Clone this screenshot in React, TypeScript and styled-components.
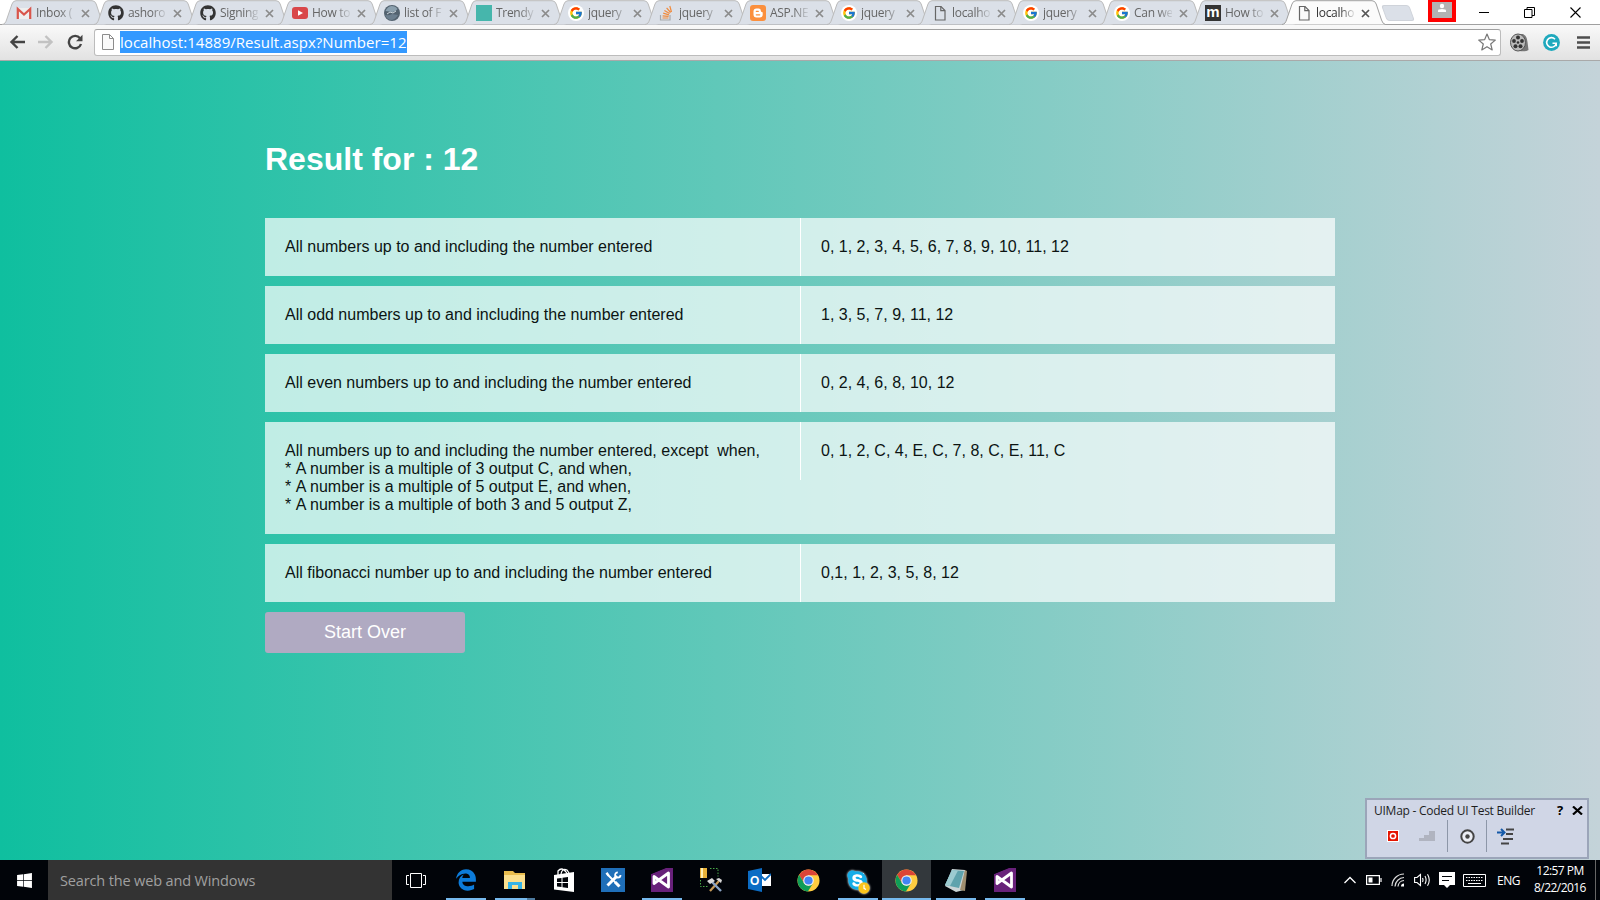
import React from "react";
import styled, { createGlobalStyle, css } from "styled-components";
import { FaGithub, FaWindows, FaEdgeLegacy, FaSkype } from "react-icons/fa6";
import { FcGoogle } from "react-icons/fc";

const UI = `"Open Sans", "Noto Sans", sans-serif`;

const Global = createGlobalStyle`
  * { box-sizing: border-box; }
  body { margin: 0; overflow: hidden; }
  svg { display: block; flex: none; }
`;

const Screen = styled.div`
  width: 1600px;
  height: 900px;
  display: flex;
  flex-direction: column;
  overflow: hidden;
  position: relative;
  font-family: ${UI};
`;

/* ---------- tab strip ---------- */
const Strip = styled.div`
  height: 24px;
  display: flex;
  flex: none;
  padding-left: 3px;
  background: #fff;
`;
const TabBox = styled.div<{ $active?: boolean }>`
  width: 91px;
  height: 24px;
  flex: none;
  position: relative;
  display: flex;
  align-items: center;
  padding: 2px 0 0 13px;
  z-index: ${(p) => (p.$active ? 2 : "auto")};
  svg { position: relative; }
  &:nth-child(-n + 6) { width: 92px; }
`;
const TabShape = styled.svg`
  && {
    position: absolute;
    left: -1px;
    top: 0;
  }
`;
const TabTitle = styled.span<{ $active?: boolean }>`
  position: relative;
  width: 38px;
  margin-left: 4px;
  white-space: nowrap;
  font-size: 12px;
  line-height: 18px;
  letter-spacing: -0.3px;
  color: ${(p) => (p.$active ? "#333" : "#666")};
  mask-image: linear-gradient(90deg, #000 62%, rgba(0, 0, 0, 0.15) 100%);
`;
const CloseX = styled.svg`
  margin: 1px 0 0 7px;
`;
const NewTab = styled.div`
  width: 28px;
  height: 16px;
  margin: 5px 0 0 10px;
  background: #dbe0e8;
  border: 1px solid #cfd3da;
  border-radius: 3px;
  transform: skewX(20deg);
`;
const Avatar = styled.div`
  width: 28px;
  height: 22px;
  margin-left: auto;
  background: #b2b2b2;
  border: solid #f00;
  border-width: 2px 4px 4px;
  display: flex;
  justify-content: center;
`;
const WinButtons = styled.div`
  width: 144px;
  height: 24px;
  display: flex;
  align-items: center;
  padding: 0 19px 0 23px;
  justify-content: space-between;
`;

/* ---------- toolbar ---------- */
const Toolbar = styled.div`
  height: 37px;
  flex: none;
  display: flex;
  align-items: center;
  padding: 0 9px 1px 9px;
  background: linear-gradient(#f9f9f9, #e2e2e2);
  border-top: 1px solid #a0a0a0;
  border-bottom: 1px solid #a9a9a9;
`;
const NavIcons = styled.div`
  display: flex;
  width: 85px;
  gap: 13px;
`;
const Omnibox = styled.div`
  width: 1407px;
  height: 27px;
  display: flex;
  align-items: center;
  padding: 0 4px 0 7px;
  background: #fff;
  border: 1px solid #bcbcbc;
  border-top-color: #a0a0a0;
  border-radius: 3px;
`;
const Url = styled.span`
  margin: 0 auto 0 6px;
  height: 22px;
  width: 287px;
  line-height: 23px;
  background: #3399ff;
  color: #fff;
  font-size: 15px;
  letter-spacing: 0.04px;
  white-space: nowrap;
`;
const Extensions = styled.div`
  display: flex;
  align-items: center;
  justify-content: space-between;
  width: 80px;
  margin-left: 9px;
`;
const Grammar = styled.svg`
  margin-right: 3px;
`;

/* ---------- web page ---------- */
const Page = styled.main`
  flex: none;
  height: 799px;
  padding: 77px 265px 0;
  background: linear-gradient(90deg, #0fbf9f, #c4d3d9);
  font-family: "Liberation Sans", Arial, sans-serif;
  font-size: 16px;
  line-height: 18px;
`;
const Heading = styled.h1`
  margin: 0 0 59px;
  font-size: 32px;
  line-height: 42px;
  height: 21px;
  font-weight: bold;
  color: #fff;
`;
const ResultRow = styled.div`
  display: flex;
  align-items: flex-start;
  width: 1070px;
  margin-bottom: 10px;
  background: rgba(255, 255, 255, 0.7);
  color: #0c1413;
`;
const Label = styled.div`
  width: 535px;
  padding: 20px;
  white-space: pre;
`;
const Star = styled.span`
  margin-right: 0.1px;
`;
const Value = styled.div`
  width: 535px;
  padding: 20px;
  border-left: 1px solid #fff;
`;
const StartOver = styled.button`
  display: block;
  width: 200px;
  height: 41px;
  padding: 0 0 2px;
  border: 0;
  border-radius: 3px;
  background: #b0aac2;
  color: #fff;
  font: 18px/36px "Liberation Sans", Arial, sans-serif;
`;

/* ---------- floating test builder ---------- */
const Builder = styled.aside`
  position: absolute;
  left: 1365px;
  top: 798px;
  width: 224px;
  height: 61px;
  border: 2px solid #9ba5b9;
  background: #d0d6e6;
`;
const BuilderTitle = styled.div`
  display: flex;
  align-items: center;
  height: 20px;
  padding: 0 4px 0 7px;
  font-size: 12px;
  color: #1e1e1e;
  white-space: nowrap;
`;
const BuilderName = styled.span`
  width: 183px;
  letter-spacing: -0.25px;
`;
const BuilderHelp = styled.b`
  width: 15px;
  font-size: 13px;
  color: #000;
`;
const BuilderTools = styled.div`
  display: flex;
  align-items: center;
  height: 32px;
  padding-left: 20px;
`;
const Rule = styled.i<{ $l: number; $r: number }>`
  width: 1px;
  height: 32px;
  background: #8d97a8;
  margin: 0 ${(p) => p.$r}px 0 ${(p) => p.$l}px;
`;
const StepsIcon = styled.svg`
  margin-left: 20px;
`;

/* ---------- taskbar ---------- */
const Taskbar = styled.footer`
  height: 40px;
  flex: none;
  display: flex;
  background: #010409;
  color: #fff;
`;
const Start = styled.div`
  width: 48px;
  display: flex;
  align-items: center;
  justify-content: center;
`;
const Search = styled.div`
  width: 344px;
  padding-left: 12px;
  background: #333;
  color: #a0a0a0;
  font-size: 14.5px;
  line-height: 41px;
  letter-spacing: -0.14px;
`;
const Task = styled.div<{ $open?: boolean; $active?: boolean; $grouped?: boolean }>`
  width: 49px;
  height: 40px;
  flex: none;
  display: flex;
  align-items: center;
  justify-content: center;
  position: relative;
  background: ${(p) => (p.$active ? "#33383c" : "none")};
  ${(p) =>
    p.$open &&
    css`
      &::after {
        content: "";
        position: absolute;
        left: ${p.$active ? 0 : 5}px;
        right: ${p.$active ? 0 : 4}px;
        bottom: 0;
        height: 2px;
        background: ${p.$grouped ? "linear-gradient(90deg, #76b9ed 79%, #4d7ba0 79%)" : "#76b9ed"};
      }
    `}
`;
const TaskViewTask = styled(Task)`
  padding-right: 1px;
`;
const Tray = styled.div`
  margin-left: auto;
  display: flex;
  align-items: center;
  gap: 8px;
`;
const Battery = styled.svg`
  margin: 0 1px 0 2px;
`;
const Lang = styled.span`
  width: 25px;
  margin-left: 3px;
  font-size: 12px;
  letter-spacing: -0.5px;
`;
const Clock = styled.div`
  width: 60px;
  font-size: 12px;
  line-height: 17px;
  letter-spacing: -0.55px;
  text-align: center;
  white-space: nowrap;
  padding-bottom: 2px;
`;
const Peek = styled.div`
  width: 5px;
  height: 40px;
  margin-left: -3px;
  border-left: 1px solid #666;
`;

/* ---------- icons ---------- */
const Gmail = () => (
  <svg width="16" height="16" viewBox="0 0 16 16">
    <path d="M1 3h14v11H1z" fill="#eee" />
    <path d="M1.800 14V4l6.200 5.500L14.200 4v10" fill="none" stroke="#d9554b" strokeWidth="2.200" />
  </svg>
);
const Github = () => <FaGithub size={16} color="#333" />;
const YouTube = () => (
  <svg width="16" height="16" viewBox="0 0 16 16">
    <rect y="2" width="16" height="12" rx="3" fill="#d9474a" />
    <path d="M6 5.200v5.600L11 8z" fill="#fff" />
  </svg>
);
const Globe = () => (
  <svg width="16" height="16" viewBox="0 0 16 16">
    <circle cx="8" cy="8" r="8" fill="#53626f" />
    <path d="M1.500 6q2-4.500 6-5 4 0 6 3-2 3-5 3z" fill="#8ba0ae" />
    <path d="M1 10q4 1 7-1l6 1q-2 4-6 5-5 0-7-5z" fill="#6b7e8e" />
    <path d="M3 9l3-2 3 1 3-2" fill="none" stroke="#ccd6dc" />
  </svg>
);
const Teal = () => (
  <svg width="16" height="16">
    <rect width="16" height="16" fill="#46b6ac" />
  </svg>
);
const GoogleHolder = styled.span`
  position: relative;
  width: 16px;
  height: 16px;
  border-radius: 50%;
  background: #fff;
  display: flex;
  align-items: center;
  justify-content: center;
`;
const Google = () => (
  <GoogleHolder>
    <FcGoogle size={14} />
  </GoogleHolder>
);
const Stack = () => (
  <svg width="16" height="16" viewBox="0 0 16 16">
    <path d="M1.500 10v5h9.500v-5" fill="none" stroke="#a7a9ac" strokeWidth="1.200" />
    <path d="M3.500 13h6M3.600 10.800l6 .6M4.200 8.200l5.800 1.600M5.400 5.400l5.200 3.200M7.600 2.900l4 4.600M10.800 1l1.700 6" stroke="#f08a3c" strokeWidth="1.200" />
  </svg>
);
const Blogger = () => (
  <svg width="16" height="16" viewBox="0 0 16 16">
    <rect width="16" height="16" rx="3" fill="#fb8f3d" />
    <path d="M6.500 3.500h2a2.400 2.400 0 0 1 2.400 2.400q0 1 1 1t.8 1v1.600a3 3 0 0 1-3 3H6.500a3 3 0 0 1-3-3v-3a3 3 0 0 1 3-3z" fill="#fff" />
    <path d="M6.300 6.300h2M6.300 9.800h3.400" stroke="#fb8f3d" strokeWidth="1.300" strokeLinecap="round" />
  </svg>
);
const FileIcon = () => (
  <svg width="16" height="16" viewBox="0 0 16 16" fill="none" stroke="#666" strokeWidth="1.200">
    <path d="M3.500 1.500h5.500l4 4v9.500h-9.500z" />
    <path d="M8.800 1.500v4.200h4.200" />
  </svg>
);
const MLetter = styled.span`
  position: relative;
  width: 16px;
  height: 16px;
  background: #333;
  color: #fff;
  font: bold 15px/13px "Liberation Sans", sans-serif;
  text-align: center;
`;
const MLogo = () => <MLetter>m</MLetter>;

const Chrome = () => (
  <svg width="23" height="23" viewBox="0 0 24 24">
    <circle cx="12" cy="12" r="11.500" fill="#ffcd40" />
    <path d="M2.200 6.100A11.500 11.500 0 0 1 22 6.500L12 6.500 7.300 14.700z" fill="#db4437" />
    <path d="M2.200 6.100 7.300 14.700 12 17.500 16.500 15 11.400 23.500A11.500 11.500 0 0 1 2.200 6.100z" fill="#0f9d58" />
    <circle cx="12" cy="12" r="5.500" fill="#f1f1f1" />
    <circle cx="12" cy="12" r="4.300" fill="#4285f4" />
  </svg>
);
const VisualStudio = () => (
  <svg width="22" height="24" viewBox="0 0 22 24">
    <path d="M0 6 14 0H22V24H0z" fill="#68217a" />
    <path d="M0 0h15L0 6z" fill="#010409" />
    <path d="M3 8.500v7L17.500 5v14z" fill="none" stroke="#fff" strokeWidth="2.800" strokeLinejoin="round" />
  </svg>
);
const TaskView = () => (
  <svg width="20" height="15" viewBox="0 0 20 15" fill="none" stroke="#fff">
    <path d="M4.500.5h11v14h-11zM3 2.500H.5v9H3M17 2.500h2.500v9H17" />
  </svg>
);
const Explorer = () => (
  <svg width="23" height="20" viewBox="0 0 23 20">
    <path d="M1 1h9l2 2h10v15H1z" fill="#e9bd4e" />
    <path d="M1 5h21v14H1z" fill="#fbe08e" />
    <path d="M5 12h14v7h-4v-4H9v4H5z" fill="#35b4e8" />
  </svg>
);
const Store = () => (
  <svg width="22" height="24" viewBox="0 0 22 24">
    <path d="M5 7V3q3-3.500 6-1t3 4M8 6q1-6 6-4l2 3" fill="none" stroke="#fff" strokeWidth="1.300" />
    <path d="M1 7 21 4v20L1 21.500z" fill="#fff" />
    <path d="m4 10.500 4.500-.6v4H4zM9.500 9.700l5.500-.7v4.900H9.500zM4 15h4.500v4L4 18.500zM9.500 15H15v4.900l-5.500-.7z" fill="#010409" />
  </svg>
);
const Tools = () => (
  <svg width="24" height="24" viewBox="0 0 24 24">
    <path d="M0 0h24v24H0z" fill="#1f6fb8" />
    <path d="m6 6 6 6M12.500 12.500l5 5.500" stroke="#fff" strokeWidth="1.800" />
    <path d="m14 14 4.500 4.500M16 8l-9.500 9.500" stroke="#fff" strokeWidth="3" />
    <path d="M19.500 7a2.700 2.700 0 1 1-2.700-2.700" fill="none" stroke="#fff" strokeWidth="1.800" />
    <path d="m4.500 5.500 2-1.500 2 3-1.500 1.500z" fill="#fff" />
  </svg>
);
const DbTools = () => (
  <svg width="24" height="26" viewBox="0 0 24 26">
    <path d="M1 1h7v10H1z" fill="#e8b23a" />
    <path d="M2 1h2v10H2z" fill="#fff0b5" />
    <path d="M11 1.500h8v8M1.500 13v6.500h8" fill="none" stroke="#49a848" strokeDasharray="1.500 1.500" />
    <path d="m11 24 9-10" stroke="#c79b58" strokeWidth="2.200" />
    <path d="m12 14 10 10" stroke="#8aa3c4" strokeWidth="2.400" />
    <path d="m8 14 5-3 3 3-5 3zM17 12l5 4 1-3-3-2z" fill="#d8d8d8" />
  </svg>
);
const OutlookText = styled.text`
  font: bold 12px "Liberation Sans", sans-serif;
`;
const Outlook = () => (
  <svg width="23" height="24" viewBox="0 0 23 24">
    <path d="M12 6h11v12H12z" fill="#fff" />
    <path d="m13 8 4 4 6-6" fill="none" stroke="#0b6cc4" strokeWidth="1.800" />
    <path d="M0 3 14 0v24L0 21z" fill="#0b6cc4" />
    <OutlookText x="2" y="16.500" fill="#fff">O</OutlookText>
  </svg>
);
const SkypeHolder = styled.span`
  position: relative;
  display: flex;
  filter: drop-shadow(0 0 1px #fff);
`;
const SkypeFill = styled.i`
  position: absolute;
  left: 6px;
  top: 4px;
  width: 12px;
  height: 15px;
  background: #fff;
`;
const SkypeMark = styled(FaSkype)`
  position: relative;
`;
const AwayBadge = styled.svg`
  position: absolute;
  left: 12px;
  top: 13px;
`;
const Skype = () => (
  <SkypeHolder>
    <SkypeFill />
    <SkypeMark size={23} color="#16ade8" />
    <AwayBadge width="12" height="12" viewBox="0 0 12 12">
      <circle cx="6" cy="6" r="5.700" fill="#fbc41c" />
      <path d="M6 2.800V6.300l2 1.200" fill="none" stroke="#fff" strokeWidth="1.200" />
    </AwayBadge>
  </SkypeHolder>
);
const Notepad = () => (
  <svg width="24" height="24" viewBox="0 0 24 24">
    <path d="M8 1 21 2 20 22 12 24 1 18z" fill="#c9d4d6" />
    <path d="m21 2 2 1-2 20-5-1z" fill="#a08f70" />
    <path d="M8 2 20 3 15 20 1 17z" fill="#5fa3ad" />
    <path d="M8 2 14 2.500 6 18 1 17z" fill="#9ccbd1" />
  </svg>
);

/* ---------- data ---------- */
const tabs: { title: string; icon: React.ReactNode }[] = [
  { title: "Inbox (", icon: <Gmail /> },
  { title: "ashoro", icon: <Github /> },
  { title: "Signing", icon: <Github /> },
  { title: "How to", icon: <YouTube /> },
  { title: "list of F", icon: <Globe /> },
  { title: "Trendy", icon: <Teal /> },
  { title: "jquery", icon: <Google /> },
  { title: "jquery", icon: <Stack /> },
  { title: "ASP.NE", icon: <Blogger /> },
  { title: "jquery", icon: <Google /> },
  { title: "localho", icon: <FileIcon /> },
  { title: "jquery", icon: <Google /> },
  { title: "Can we", icon: <Google /> },
  { title: "How to", icon: <MLogo /> },
  { title: "localho", icon: <FileIcon /> },
];

const results: { label: string; rules?: string[]; value: string }[] = [
  { label: "All numbers up to and including the number entered", value: "0, 1, 2, 3, 4, 5, 6, 7, 8, 9, 10, 11, 12" },
  { label: "All odd numbers up to and including the number entered", value: "1, 3, 5, 7, 9, 11, 12" },
  { label: "All even numbers up to and including the number entered", value: "0, 2, 4, 6, 8, 10, 12" },
  {
    label: "All numbers up to and including the number entered, except  when,",
    rules: [
      "A number is a multiple of 3 output C, and when,",
      "A number is a multiple of 5 output E, and when,",
      "A number is a multiple of both 3 and 5 output Z,",
    ],
    value: "0, 1, 2, C, 4, E, C, 7, 8, C, E, 11, C",
  },
  { label: "All fibonacci number up to and including the number entered", value: "0,1, 1, 2, 3, 5, 8, 12" },
];

function Tab({ title, icon, active }: { title: string; icon: React.ReactNode; active?: boolean }) {
  return (
    <TabBox $active={active}>
      <TabShape width="104" height="26" viewBox="0 0 104 26">
        <path
          d="M0 24.500C3 24 3.500 22.500 4.500 20L10 4Q11.200.7 14 .7H90Q93 .7 94.200 4L99.500 20Q100.700 24 103.500 24.500"
          fill={active ? "#fbfbfb" : "#dbe0e8"}
          stroke={active ? "#a0a0a0" : "#bbb"}
        />
      </TabShape>
      {icon}
      <TabTitle $active={active}>{title}</TabTitle>
      <CloseX width="9" height="9" viewBox="0 0 9 9">
        <path d="m1 1 7 7M8 1 1 8" stroke={active ? "#555" : "#8b8b8b"} strokeWidth="1.700" />
      </CloseX>
    </TabBox>
  );
}

export default function App() {
  return (
    <Screen>
      <Global />
      <Strip>
        {tabs.map((t, i) => (
          <Tab key={i} {...t} active={i === tabs.length - 1} />
        ))}
        <NewTab />
        <Avatar>
          <svg width="10" height="10" viewBox="0 0 10 10" fill="#fff">
            <circle cx="5" cy="4" r="2.200" />
            <path d="M1 10V8.500q0-1.500 4-1.500t4 1.500V10z" />
          </svg>
        </Avatar>
        <WinButtons>
          <svg width="10" height="10"><path d="M0 5.500h10" stroke="#000" /></svg>
          <svg width="11" height="11" viewBox="0 0 11 11" fill="none" stroke="#000">
            <path d="M.5 2.500h7.500v8H.5zM3 2.500V.5h7.500v8H8" />
          </svg>
          <svg width="11" height="11"><path d="m.5.5 10 10M10.500.5l-10 10" stroke="#000" strokeWidth="1.100" /></svg>
        </WinButtons>
      </Strip>

      <Toolbar>
        <NavIcons>
          <svg width="16" height="16" viewBox="0 0 16 16" fill="none" stroke="#444" strokeWidth="2.400">
            <path d="M16 8H2.500M8.500 2l-6 6 6 6" />
          </svg>
          <svg width="16" height="16" viewBox="0 0 16 16" fill="none" stroke="#c2c2c2" strokeWidth="2.400">
            <path d="M0 8h13.500M7.500 2l6 6-6 6" />
          </svg>
          <svg width="16" height="16" viewBox="0 0 16 16">
            <path d="M13 4.300A6.200 6.200 0 1 0 14 10" fill="none" stroke="#444" strokeWidth="2.400" />
            <path d="M15.500.8v6.500H9z" fill="#444" />
          </svg>
        </NavIcons>
        <Omnibox>
          <svg width="12" height="16" viewBox="0 0 12 16" fill="#fafafa" stroke="#8c8c8c">
            <path d="M.5.5h7l4 4v11H.5zM7.500.5v4h4" />
          </svg>
          <Url>localhost:14889/Result.aspx?Number=12</Url>
          <svg width="18" height="18" viewBox="0 0 18 18" fill="none" stroke="#777" strokeWidth="1.200" strokeLinejoin="round">
            <path d="m9 1 2.300 5.600 6 .5-4.600 3.900 1.500 5.900L9 13.700l-5.200 3.200L5.300 11 .7 7.100l6-.5z" />
          </svg>
        </Omnibox>
        <Extensions>
          <svg width="19" height="19" viewBox="0 0 19 19">
            <path d="M9 1h4q4 2 4.500 8l1 8q-3 2-9 1z" fill="#777" />
            <ellipse cx="8" cy="9.500" rx="7.500" ry="8.500" fill="#bbb" stroke="#555" />
            <g fill="#333">
              <circle cx="8" cy="9.500" r="1.300" />
              <circle cx="8" cy="4.500" r="2" />
              <circle cx="4" cy="8" r="1.900" />
              <circle cx="12" cy="8" r="1.900" />
              <circle cx="5.500" cy="13.300" r="2" />
              <circle cx="10.500" cy="13.300" r="2" />
            </g>
          </svg>
          <Grammar width="17" height="17" viewBox="0 0 17 17">
            <circle cx="8.500" cy="8.500" r="8.400" fill="#1fa9bd" />
            <path d="M12 5.200A4.800 4.800 0 1 0 13.200 9.300H9.500M13.200 9.300v3" fill="none" stroke="#fff" strokeWidth="1.600" />
          </Grammar>
          <svg width="13" height="13" viewBox="0 0 13 13" stroke="#4d4d4d" strokeWidth="2.600">
            <path d="M0 1.500h13M0 6.500h13M0 11.500h13" />
          </svg>
        </Extensions>
      </Toolbar>

      <Page>
        <Heading>Result for : 12</Heading>
        {results.map(({ label, rules, value }) => (
          <ResultRow key={label}>
            <Label>
              {label}
              {rules?.map((rule) => (
                <div key={rule}>
                  <Star>* </Star>
                  {rule}
                </div>
              ))}
            </Label>
            <Value>{value}</Value>
          </ResultRow>
        ))}
        <StartOver>Start Over</StartOver>
      </Page>

      <Taskbar>
        <Start><FaWindows size={17} /></Start>
        <Search>Search the web and Windows</Search>
        <TaskViewTask><TaskView /></TaskViewTask>
        <Task $open><FaEdgeLegacy size={22} color="#0c7bd9" /></Task>
        <Task $open $grouped><Explorer /></Task>
        <Task><Store /></Task>
        <Task><Tools /></Task>
        <Task $open><VisualStudio /></Task>
        <Task><DbTools /></Task>
        <Task><Outlook /></Task>
        <Task><Chrome /></Task>
        <Task $open><Skype /></Task>
        <Task $open $active><Chrome /></Task>
        <Task $open><Notepad /></Task>
        <Task $open><VisualStudio /></Task>
        <Tray>
          <svg width="12" height="8" viewBox="0 0 12 8" fill="none" stroke="#fff" strokeWidth="1.300"><path d="m.5 7 5.500-5.500L11.500 7" /></svg>
          <Battery width="16" height="10" viewBox="0 0 16 10" fill="none" stroke="#fff" strokeWidth="1.200">
            <path d="M.6.6h12.800v8.800H.6zM15 3v4" />
            <path d="M2.500 2.500h4v5h-4z" fill="#fff" stroke="none" />
          </Battery>
          <svg width="15" height="14" viewBox="0 0 15 14" fill="none" stroke="#ddd" strokeWidth="1.200">
            <path d="M1 13A12 12 0 0 1 13 1M4 13.500A9.500 9.500 0 0 1 13 4.500M7 13.500A6.500 6.500 0 0 1 13 7.500" />
            <path d="M10 13.500a3 3 0 0 1 3-3v3z" fill="#fff" stroke="none" />
          </svg>
          <svg width="17" height="14" viewBox="0 0 17 14" fill="none" stroke="#fff" strokeWidth="1.100">
            <path d="M.6 4.500H3L6.500 1.500v11L3 9.500H.6zM8.500 5q1 2 0 4M11 3q2.200 4 0 8M13.500 1.200q3.500 5.800 0 11.600" />
          </svg>
          <svg width="16" height="16" viewBox="0 0 16 16">
            <path d="M0 0h16v13h-5l-3 3-3-3H0z" fill="#fff" />
            <path d="M3 4.500h10M3 8.500h7" stroke="#010409" />
          </svg>
          <svg width="23" height="13" viewBox="0 0 23 13" fill="none" stroke="#fff">
            <path d="M.5.5h22v12H.5z" />
            <path d="M3 3.500h17M3 6.500h17" strokeDasharray="1.500 1" />
            <path d="M5 9.500h13" />
          </svg>
          <Lang>ENG</Lang>
          <Clock>
            12:57 PM
            <br />
            8/22/2016
          </Clock>
          <Peek />
        </Tray>
      </Taskbar>

      <Builder>
        <BuilderTitle>
          <BuilderName>UIMap - Coded UI Test Builder</BuilderName>
          <BuilderHelp>?</BuilderHelp>
          <svg width="11" height="9" viewBox="0 0 11 9"><path d="m1 .5 9 8M10 .5l-9 8" stroke="#000" strokeWidth="2.200" /></svg>
        </BuilderTitle>
        <BuilderTools>
          <svg width="12" height="12" viewBox="0 0 12 12">
            <path d="M0 0h12v12H0z" fill="#fff" />
            <path d="M1 1h10v10H1z" fill="#e51400" />
            <circle cx="6" cy="6" r="2.600" fill="none" stroke="#fff" strokeWidth="1.500" />
          </svg>
          <StepsIcon width="17" height="12" viewBox="0 0 17 12"><path d="M0 11V8h5V5h5V1h6v10z" fill="#b0b4c0" /></StepsIcon>
          <Rule $l={11} $r={12} />
          <svg width="15" height="15" viewBox="0 0 15 15">
            <circle cx="7.500" cy="7.500" r="6.200" fill="#eceef4" stroke="#444" strokeWidth="2" />
            <circle cx="7.500" cy="7.500" r="2.200" fill="#444" />
          </svg>
          <Rule $l={11} $r={10} />
          <svg width="17" height="17" viewBox="0 0 17 17">
            <path d="M9 1.500h8M9 6h7M6 11h10M4 15.500h8" stroke="#444" strokeWidth="2" />
            <path d="M0 4.500h6M4 1l3.500 3.500L4 8" fill="none" stroke="#1459a8" strokeWidth="2" />
          </svg>
        </BuilderTools>
      </Builder>
    </Screen>
  );
}
